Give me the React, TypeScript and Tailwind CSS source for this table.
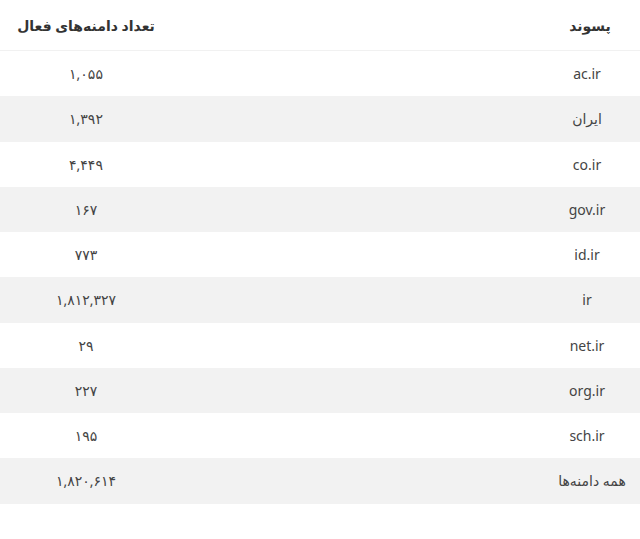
const rows: [string, string][] = [
  ["ac.ir", "۱,۰۵۵"],
  ["ایران", "۱,۳۹۲"],
  ["co.ir", "۴,۴۴۹"],
  ["gov.ir", "۱۶۷"],
  ["id.ir", "۷۷۳"],
  ["ir", "۱,۸۱۲,۳۲۷"],
  ["net.ir", "۲۹"],
  ["org.ir", "۲۲۷"],
  ["sch.ir", "۱۹۵"],
  ["همه دامنه‌ها", "۱,۸۲۰,۶۱۴"],
];

export default function App() {
  return (
    <div
      dir="rtl"
      className="w-[640px] h-[539px] bg-white text-[#444]"
      style={{ fontFamily: '"Noto Sans", "DejaVu Sans", sans-serif' }}
    >
      <div className="grid grid-cols-[106px_1fr_172px] h-[51px] items-center border-b border-[#f1f1f1] text-[14px] font-bold text-[#333]">
        <div className="text-center pl-[6px] pt-[1px]">پسوند</div>
        <div />
        <div className="text-center pt-[1px]">تعداد دامنه‌های فعال</div>
      </div>
      {rows.map(([ext, count], i) => (
        <div
          key={ext}
          className={
            "grid grid-cols-[106px_1fr_172px] h-[45.25px] items-center text-[14px] " +
            (i % 2 === 1 ? "bg-[#f2f2f2]" : "bg-white")
          }
        >
          <div className={i === rows.length - 1 ? "text-center pl-[-6px] mr-[-10px]" : "text-center"}>
            {ext}
          </div>
          <div />
          <div className="text-center">{count}</div>
        </div>
      ))}
    </div>
  );
}
